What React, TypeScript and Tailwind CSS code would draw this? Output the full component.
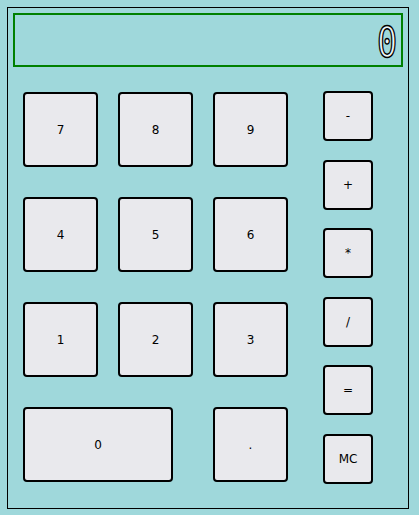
const digitRows = [
  ["7", "8", "9"],
  ["4", "5", "6"],
  ["1", "2", "3"],
];

const ops = ["-", "+", "*", "/", "=", "MC"];

function Key({ label, className }: { label: string; className: string }) {
  return (
    <button
      className={
        "flex items-center justify-center bg-[#e9e9ed] border-2 border-black rounded-[4px] text-[12px] text-black " +
        className
      }
    >
      {label}
    </button>
  );
}

export default function App() {
  return (
    <div className="min-h-screen bg-[#9fd8db] pt-[7px] pl-[7px] font-['DejaVu_Sans',sans-serif]">
      <div className="w-[402px] h-[502px] border border-black">
        <div className="mt-[5px] ml-[5px] w-[390px] h-[54px] border-2 border-[#008000] flex items-center justify-end pr-[4px]">
          <span className="font-['DejaVu_Sans_Mono',monospace] text-[42px] leading-none mt-[5px] text-[#eef6f6] [-webkit-text-stroke:1.5px_black] scale-x-[0.8] origin-right">
            0
          </span>
        </div>

        <div className="flex mt-[25px] pl-[15px]">
          <div className="flex flex-col gap-[30px]">
            {digitRows.map((row) => (
              <div key={row[0]} className="flex gap-[20px]">
                {row.map((d) => (
                  <Key key={d} label={d} className="w-[75px] h-[75px]" />
                ))}
              </div>
            ))}
            <div className="flex">
              <Key label="0" className="w-[150px] h-[75px]" />
              <Key label="." className="w-[75px] h-[75px] ml-[40px]" />
            </div>
          </div>

          <div className="flex flex-col gap-[18.6px] ml-[35px] -mt-[1px]">
            {ops.map((o) => (
              <Key key={o} label={o} className="w-[50px] h-[50px]" />
            ))}
          </div>
        </div>
      </div>
    </div>
  );
}
